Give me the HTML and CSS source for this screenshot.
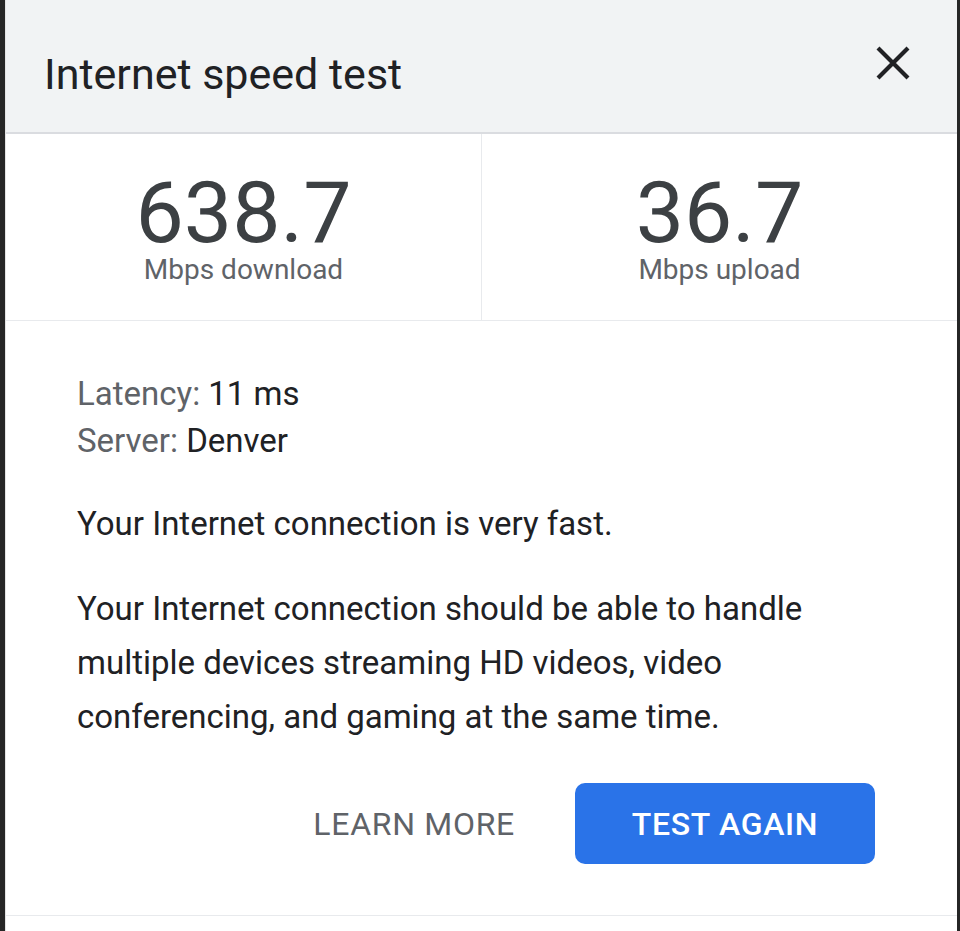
FILE: index.html
```html
<!DOCTYPE html>
<html lang="en">
<head>
<meta charset="utf-8">
<title>Internet speed test</title>
<link rel="stylesheet" href="styles.css">
</head>
<body>
<div class="screen">
  <div class="dialog">
    <header class="header">
      <h1 class="title">Internet speed test</h1>
      <button class="close" aria-label="Close">
        <svg width="34" height="34" viewBox="0 0 34 34" aria-hidden="true">
          <path d="M2 2 L32 32 M32 2 L2 32" stroke="#202124" stroke-width="4.2" fill="none"/>
        </svg>
      </button>
    </header>
    <section class="stats">
      <div class="stat">
        <div class="value">638.7</div>
        <div class="unit">Mbps download</div>
      </div>
      <div class="stat stat-right">
        <div class="value">36.7</div>
        <div class="unit">Mbps upload</div>
      </div>
    </section>
    <section class="content">
      <div class="meta">
        <div class="meta-row"><span class="meta-label">Latency:</span> 11 ms</div>
        <div class="meta-row"><span class="meta-label">Server:</span> Denver</div>
      </div>
      <p class="verdict">Your Internet connection is very fast.</p>
      <p class="desc">Your Internet connection should be able to handle multiple devices streaming HD videos, video conferencing, and gaming at the same time.</p>
      <div class="actions">
        <button class="btn-text">LEARN MORE</button>
        <button class="btn-primary">TEST AGAIN</button>
      </div>
    </section>
    <div class="footer-rule"></div>
  </div>
</div>
</body>
</html>
```
FILE: styles.css
```css
* { box-sizing: border-box; }
html, body { margin: 0; padding: 0; }
body {
  background: #262626;
  font-family: Roboto, "Liberation Sans", Arial, sans-serif;
}
.screen {
  display: flex;
  min-height: 931px;
  padding: 0 3px 0 5px;
}
.dialog {
  flex: 1;
  background: #ffffff;
  display: flex;
  flex-direction: column;
  border-left: 1px solid #e4e4e4;
}
.header {
  height: 134px;
  background: #f1f3f4;
  border-bottom: 2px solid #dadce0;
  display: flex;
  justify-content: space-between;
  align-items: flex-start;
  padding: 0 47px 0 38px;
}
.title {
  margin: 53px 0 0;
  font-size: 43px;
  line-height: 43px;
  font-weight: 400;
  color: #202124;
}
.close {
  margin-top: 46px;
  padding: 0;
  border: 0;
  background: transparent;
  width: 34px;
  height: 34px;
  display: flex;
}
.stats {
  display: flex;
  border-bottom: 1px solid #e8eaed;
}
.stat {
  flex: 1;
  display: flex;
  flex-direction: column;
  align-items: center;
  padding: 36px 0;
}
.stat-right {
  border-left: 1px solid #e8eaed;
}
.value {
  font-size: 86px;
  line-height: 86px;
  color: #3c4043;
}
.unit {
  font-size: 28px;
  line-height: 28px;
  color: #5f6368;
}
.content {
  padding: 49px 82px 51px 71px;
  border-bottom: 1px solid #e8eaed;
}
.meta-row {
  font-size: 33px;
  line-height: 47px;
  color: #202124;
}
.meta-label {
  color: #5f6368;
}
.verdict {
  margin: 33px 0 0;
  font-size: 33px;
  line-height: 54px;
  color: #202124;
}
.desc {
  margin: 31px 0 0;
  font-size: 33px;
  line-height: 54px;
  color: #202124;
}
.actions {
  margin-top: 39px;
  display: flex;
  justify-content: flex-end;
  gap: 32px;
}
.btn-text, .btn-primary {
  height: 81px;
  border: 0;
  font-family: inherit;
  font-size: 32px;
  letter-spacing: 0.7px;
  border-radius: 10px;
}
.btn-text {
  background: transparent;
  color: #5f6368;
  font-weight: 400;
  padding: 0 28px;
}
.btn-primary {
  width: 300px;
  background: #2a73e8;
  color: #ffffff;
  font-weight: 500;
  padding: 0;
}
.footer-rule {
  flex: 1;
}
```
